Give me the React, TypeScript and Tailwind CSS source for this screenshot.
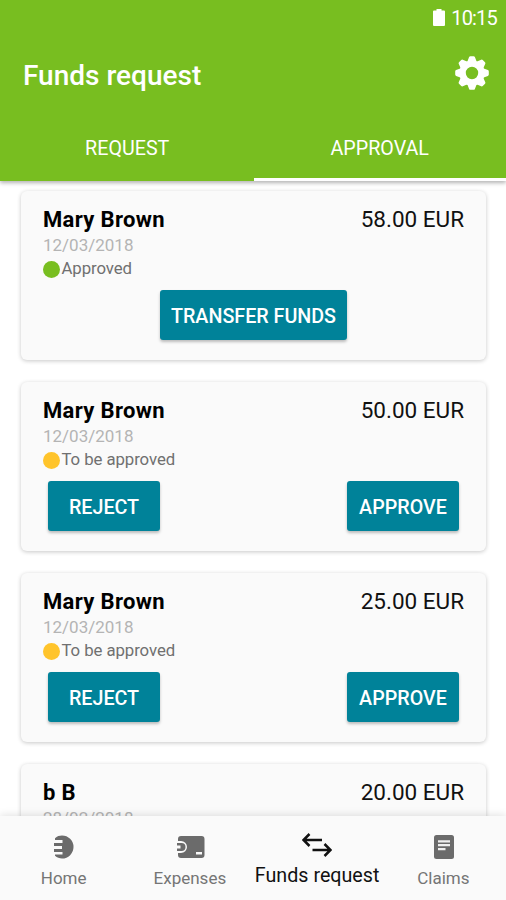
import type { ReactNode } from "react";

type FundsRequest = {
  name: string;
  amount: string;
  date: string;
  status?: "approved" | "pending";
};

const requests: FundsRequest[] = [
  { name: "Mary Brown", amount: "58.00 EUR", date: "12/03/2018", status: "approved" },
  { name: "Mary Brown", amount: "50.00 EUR", date: "12/03/2018", status: "pending" },
  { name: "Mary Brown", amount: "25.00 EUR", date: "12/03/2018", status: "pending" },
  { name: "b B", amount: "20.00 EUR", date: "28/02/2018" },
];

function GearIcon() {
  return (
    <svg viewBox="-17 -17 34 34" className="size-[34px]" fill="#fff">
      {[0, 45, 90, 135].map((angle) => (
        <path
          key={angle}
          transform={`rotate(${angle})`}
          d="M-4.8 -11 L-2.9 -15.9 Q-2.5 -16.8 -1.6 -16.8 H1.6 Q2.5 -16.8 2.9 -15.9 L4.8 -11 V-9 H-4.8Z M-4.8 11 L-2.9 15.9 Q-2.5 16.8 -1.6 16.8 H1.6 Q2.5 16.8 2.9 15.9 L4.8 11 V9 H-4.8Z"
        />
      ))}
      <circle r="9.4" fill="none" stroke="#fff" strokeWidth="6.4" />
    </svg>
  );
}

function HomeIcon() {
  return (
    <svg viewBox="0 0 22 24" className="h-6 w-[22px]">
      <path
        fill="#6b6b6b"
        d="M2 3.2 C4 1.2 6.5 .5 9 .5 A11.5 11.5 0 0 1 9 23.5 C6.5 23.5 4 22.8 2 20.8 V19.6 H9.5 V17 H1 V14 H9 V11 H1 V8 H9.5 V5 H2Z"
      />
    </svg>
  );
}

function ExpensesIcon() {
  return (
    <svg viewBox="0 0 28 22" className="ml-[1px] h-[22px] w-7">
      <path
        fill="#6b6b6b"
        d="M4 0 H24.5 A3 3 0 0 1 27.5 3 V19 A3 3 0 0 1 24.5 22 H4 A3 3 0 0 1 1 19 V17 H4 A6 6 0 0 0 4 5 H1 V3 A3 3 0 0 1 4 0Z"
      />
      <path fill="#6b6b6b" d="M0 7 H4.5 A4 4 0 0 1 4.5 15 H0 V12.5 H3.5 V9.5 H0Z" />
      <path fill="#fafafa" d="M19 16 H25 V18.5 H19Z" />
    </svg>
  );
}

function TransferIcon() {
  return (
    <svg viewBox="0 0 30 24" className="h-6 w-[30px]" fill="none" stroke="#111" strokeWidth="2.5">
      <path d="M20 7 H1.5 M7.5 1 L1.5 7 L7.5 13" />
      <path d="M10.5 17 H28.5 M22.5 11 L28.5 17 L22.5 23" />
    </svg>
  );
}

function ClaimsIcon() {
  return (
    <svg viewBox="0 0 20 24" className="h-6 w-5">
      <rect width="20" height="24" rx="2.5" fill="#6b6b6b" />
      <path d="M4 6.3 H16 M4 10.2 H16 M4 14.1 H11.5" stroke="#f0f0f0" strokeWidth="2.3" />
    </svg>
  );
}

function ActionButton({ wide, children }: { wide?: boolean; children: ReactNode }) {
  return (
    <button
      className={`${wide ? "w-[187px]" : "w-28"} h-[50px] rounded-[3px] bg-[#008299] pt-[3px] text-[19.7px] font-medium whitespace-nowrap text-white shadow-[0_2px_3px_rgba(0,0,0,0.25)]`}
    >
      {children}
    </button>
  );
}

function StatusLine({ approved }: { approved: boolean }) {
  return (
    <div className="flex h-[22px] items-center gap-[1.5px] text-[16.8px] text-[#707070]">
      <span className={`size-[17px] rounded-full ${approved ? "bg-[#78be20]" : "bg-[#ffc42b]"}`} />
      <span className="tracking-[-0.08px]">{approved ? "Approved" : "To be approved"}</span>
    </div>
  );
}

function RequestCard({ request }: { request: FundsRequest }) {
  const { name, amount, date, status } = request;

  return (
    <article className="h-[169px] shrink-0 rounded-[6px] bg-[#fafafa] px-[22px] pt-[14px] shadow-[0_1px_4px_rgba(0,0,0,0.22)]">
      <div className="flex h-7 items-center justify-between text-[22px] text-black">
        <h2 className="font-bold tracking-[0.35px]">{name}</h2>
        <span className="pt-[2px] text-[22.5px] text-[#111]">{amount}</span>
      </div>
      <p className="h-[25px] text-[17px] leading-[25px] text-[#b4b4b4]">{date}</p>
      {status && <StatusLine approved={status === "approved"} />}
      {status === "approved" && (
        <div className="mt-[10px] flex justify-center">
          <ActionButton wide>TRANSFER FUNDS</ActionButton>
        </div>
      )}
      {status === "pending" && (
        <div className="mt-[10px] flex justify-between px-[5px]">
          <ActionButton>REJECT</ActionButton>
          <ActionButton>APPROVE</ActionButton>
        </div>
      )}
    </article>
  );
}

function NavItem({ icon, label }: { icon: ReactNode; label: string }) {
  return (
    <a className="flex flex-1 flex-col items-center pt-[18px] pl-[1px] text-[17px] text-[#757575]">
      <span className="flex h-[26px] items-center pl-[1px]">{icon}</span>
      <span className="mt-[5px] leading-[26px]">{label}</span>
    </a>
  );
}

export default function App() {
  return (
    <div className="flex h-[900px] w-[506px] flex-col overflow-hidden bg-white font-[Roboto,sans-serif]">
      <header className="z-10 flex h-[181px] shrink-0 flex-col bg-[#78be20] text-white shadow-[0_2px_4px_rgba(0,0,0,0.3)]">
        <div className="flex h-9 items-center justify-end gap-[6px] pr-[9px] text-[20px]">
          <svg viewBox="0 0 12 17" className="h-[17px] w-3" fill="#fff">
            <path d="M3.5 0 H8.5 V1.5 H11 Q12 1.5 12 2.5 V16 Q12 17 11 17 H1 Q0 17 0 16 V2.5 Q0 1.5 1 1.5 H3.5Z" />
          </svg>
          <span className="pt-[2px] tracking-[-0.8px]">10:15</span>
        </div>
        <div className="flex h-[78px] items-center justify-between pt-[2px] pr-[17px] pl-[23px]">
          <h1 className="pt-[7px] text-[28px] leading-[33px] font-medium">Funds request</h1>
          <div className="pt-[2px]">
            <GearIcon />
          </div>
        </div>
        <nav className="flex flex-1 text-center text-[19.7px] leading-[58px]">
          <a className="flex-1 pt-[12px] pl-[1px]">REQUEST</a>
          <a className="flex-1 border-b-[3px] border-white pt-[12px]">APPROVAL</a>
        </nav>
      </header>

      <main className="flex min-h-0 flex-1 flex-col gap-[22px] overflow-hidden pt-[10px] pr-5 pl-[21px]">
        {requests.map((request, i) => (
          <RequestCard key={i} request={request} />
        ))}
      </main>

      <footer className="z-10 flex h-[84px] shrink-0 bg-[#fafafa] shadow-[0_-1px_8px_rgba(0,0,0,0.12)]">
        <NavItem icon={<HomeIcon />} label="Home" />
        <NavItem icon={<ExpensesIcon />} label="Expenses" />
        <a className="flex flex-1 flex-col items-center pt-[16px] pl-[2px] text-[19.7px] whitespace-nowrap text-[#111]">
          <span className="flex h-[26px] items-center">
            <TransferIcon />
          </span>
          <span className="mt-[5px] leading-[26px]">Funds request</span>
        </a>
        <NavItem icon={<ClaimsIcon />} label="Claims" />
      </footer>
    </div>
  );
}
